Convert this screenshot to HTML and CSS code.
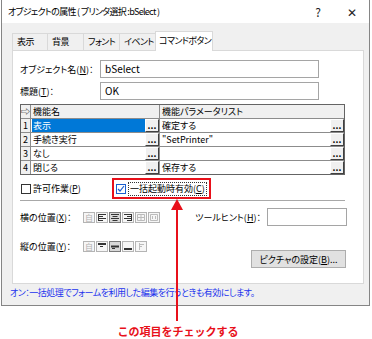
FILE: index.html
```html
<!DOCTYPE html>
<html lang="ja">
<head>
    <meta charset="UTF-8">
    <title>オブジェクトの属性</title>
    <link rel="stylesheet" href="styles.css">
</head>
<body>
<div class="window">
    <div class="titlebar">
        <span class="title">オブジェクトの属性 ( プリンタ選択 :bSelect )</span>
        <span class="tb-btn">?</span>
        <span class="tb-btn">✕</span>
    </div>
    <div class="dialog-body">
        <div class="tabs">
            <div class="tab first">表示</div>
            <div class="tab">背景</div>
            <div class="tab">フォント</div>
            <div class="tab">イベント</div>
            <div class="tab active">コマンドボタン</div>
        </div>
        <div class="panel">
            <div class="field-row">
                <label>オブジェクト名(<u>N</u>)：</label>
                <div class="input">bSelect</div>
            </div>
            <div class="field-row">
                <label>標題(<u>T</u>)：</label>
                <div class="input">OK</div>
            </div>

            <!-- 機能リスト -->
            <div class="fgrid">
                <div class="cell idx head">⇨</div>
                <div class="cell head">機能名</div>
                <div class="cell head param">機能パラメータリスト</div>

                <div class="cell idx">1</div>
                <div class="cell"><span class="sel">表示</span><span class="dots">...</span></div>
                <div class="cell param"><span class="txt">確定する</span><span class="dots">...</span></div>

                <div class="cell idx">2</div>
                <div class="cell"><span class="txt">手続き実行</span><span class="dots">...</span></div>
                <div class="cell param"><span class="txt">"SetPrinter"</span><span class="dots">...</span></div>

                <div class="cell idx">3</div>
                <div class="cell"><span class="txt">なし</span><span class="dots">...</span></div>
                <div class="cell param"><span class="txt"></span><span class="dots">...</span></div>

                <div class="cell idx last">4</div>
                <div class="cell last"><span class="txt">閉じる</span><span class="dots">...</span></div>
                <div class="cell param last"><span class="txt">保存する</span><span class="dots">...</span></div>
            </div>

            <div class="check-row">
                <div class="check first-check">
                    <span class="cb"></span>
                    <span>許可作業(<u>P</u>)</span>
                </div>
                <div class="check marked">
                    <span class="cb on">
                        <svg width="8" height="8" viewBox="0 0 8 8"><path d="M1 4l2 2 4-5" fill="none" stroke="#1a5fd0" stroke-width="1.2"/></svg>
                    </span>
                    <span class="focus">一括起動時有効(<u>C</u>)</span>
                </div>
            </div>
            <div class="separator"></div>

            <div class="lower">
                <div class="lower-left">
                    <div class="pos-row">
                        <label class="pos-label">横の位置(<u>X</u>)：</label>
                        <div class="icons">
                            <span class="ib off">自</span>
                            <span class="ib"><svg width="8" height="7" viewBox="0 0 8 7"><path d="M0.5 0v7M0 0.5h8M0 2.5h5M0 4.5h8M0 6.5h5" stroke="#333"/></svg></span>
                            <span class="ib on"><svg width="8" height="7" viewBox="0 0 8 7"><path d="M0 0.5h8M1.5 2.5h5M0 4.5h8M1.5 6.5h5" stroke="#333"/></svg></span>
                            <span class="ib"><svg width="8" height="7" viewBox="0 0 8 7"><path d="M7.5 0v7M0 0.5h8M3 2.5h5M0 4.5h8M3 6.5h5" stroke="#333"/></svg></span>
                            <span class="ib"><svg width="8" height="7" viewBox="0 0 8 7"><path d="M0.5 0.5h7v6h-7zM0 3.5h8M4 0v7" fill="none" stroke="#bbb"/></svg></span>
                            <span class="ib"><svg width="8" height="7" viewBox="0 0 8 7"><path d="M0.5 0.5h7v6h-7zM2.5 2v3M5.5 2v3" fill="none" stroke="#bbb"/></svg></span>
                        </div>
                    </div>
                    <div class="pos-row second">
                        <label class="pos-label">縦の位置(<u>Y</u>)：</label>
                        <div class="icons">
                            <span class="ib off">自</span>
                            <span class="ib"><svg width="8" height="7" viewBox="0 0 8 7"><path d="M0 0h8v2h-8zM2 3h3v1h-3z" fill="#333"/></svg></span>
                            <span class="ib on"><svg width="8" height="7" viewBox="0 0 8 7"><path d="M0 2.5h8v2h-8zM1 5h3v1h-3z" fill="#333"/></svg></span>
                            <span class="ib"><svg width="8" height="7" viewBox="0 0 8 7"><path d="M0 5h8v2h-8z" fill="#333"/></svg></span>
                            <span class="ib"><svg width="8" height="7" viewBox="0 0 8 7"><path d="M2.5 0v7M2 1.5h5M2 3.5h3" fill="none" stroke="#bbb"/></svg></span>
                        </div>
                    </div>
                </div>
                <div class="lower-right">
                    <div class="hint-row">
                        <label>ツールヒント(<u>H</u>)：</label>
                        <div class="input small"></div>
                    </div>
                    <button class="btn">ピクチャの設定(<u>B</u>)...</button>
                </div>
            </div>
        </div>
        <div class="note">オン：一括処理でフォームを利用した編集を行うときも有効にします。</div>
    </div>
</div>

<div class="callout">この項目をチェックする</div>

<!-- 注釈の矢印 -->
<svg class="arrow" width="12" height="122" viewBox="0 0 12 122">
    <path d="M6 0L0 11h12z" fill="#e8101a"/>
    <rect x="5" y="10" width="2" height="112" fill="#e8101a"/>
</svg>
</body>
</html>
```

FILE: styles.css
```css
* {
    box-sizing: border-box;
    margin: 0;
    padding: 0;
}

body {
    font-family: "Noto Sans CJK JP", "Noto Sans", sans-serif;
    font-size: 9px;
    font-feature-settings: "palt";
    color: #000;
    background: #fff;
    position: relative;
    width: 372px;
    height: 339px;
    overflow: hidden;
    white-space: nowrap;
}

u {
    text-decoration: underline;
    text-underline-offset: 1px;
}

.window {
    margin-left: 1px;
    width: 369px;
    border: 1px solid #858585;
    border-top: none;
    background: #f0f0f0;
}

.titlebar {
    height: 23px;
    background: #fff;
    display: flex;
    align-items: center;
    padding-left: 6px;
}

.title {
    flex: 1;
    font-size: 9px;
    letter-spacing: -0.7px;
}

.tb-btn {
    width: 34px;
    text-align: center;
    font-size: 12px;
    color: #222;
}

.dialog-body {
    padding: 8px 5px 5px 10px;
}

.tabs {
    display: flex;
    align-items: flex-end;
    height: 19px;
}

.tab {
    width: 37px;
    height: 17px;
    line-height: 15px;
    padding-left: 4px;
    border: 1px solid #d9d9d9;
    border-bottom: none;
    margin-right: -1px;
    background: #f0f0f0;
    letter-spacing: -0.6px;
    overflow: hidden;
}

.tab.first {
    width: 36px;
}

.tab.active {
    width: 58px;
    height: 20px;
    margin-bottom: -1px;
    line-height: 18px;
    padding-left: 3px;
    background: #fff;
    position: relative;
    z-index: 1;
}

.panel {
    height: 234px;
    border: 1px solid #d9d9d9;
    background: #fff;
    padding: 9px 17px 0 7px;
}

.field-row {
    display: flex;
    align-items: center;
    height: 18px;
    margin-bottom: 4px;
}

.field-row label {
    width: 80px;
}

.input {
    width: 219px;
    height: 18px;
    border: 1px solid #a5a5a5;
    padding-left: 4px;
    line-height: 16px;
    font-size: 10px;
}

.input.small {
    width: 80px;
    margin-right: -1px;
}

.fgrid {
    width: 325px;
    display: grid;
    grid-template-columns: 10px 129px 184px;
    border: 1px solid #646464;
}

.cell {
    height: 14px;
    display: flex;
    align-items: center;
    padding-left: 1px;
    border-right: 1px solid #8c8c8c;
    border-bottom: 1px solid #8c8c8c;
    line-height: 13px;
    overflow: hidden;
}

.cell.param {
    border-right: none;
}

.cell.last {
    height: 13px;
    border-bottom: none;
}

.cell.head {
    background: #f0f0f0;
    padding-left: 2px;
}

.cell.idx {
    background: #f0f0f0;
    justify-content: center;
    padding-left: 0;
}

.txt {
    flex: 1;
    padding-left: 1px;
}

.sel {
    flex: 1;
    height: 13px;
    padding-left: 1px;
    background: #0078d7;
    color: #fff;
}

.dots {
    width: 14px;
    height: 13px;
    flex: none;
    background: #f0f0f0;
    border: 1px solid;
    border-color: #fff #404040 #404040 #fff;
    font-size: 9px;
    font-weight: bold;
    line-height: 12px;
    text-align: center;
}

.check-row {
    display: flex;
    align-items: center;
    height: 21px;
    margin-top: 3px;
}

.check {
    display: flex;
    align-items: center;
    gap: 2px;
}

.first-check {
    width: 92px;
    padding-left: 1px;
}

.cb {
    width: 10px;
    height: 10px;
    border: 1px solid #333;
    background: #fff;
    display: flex;
    align-items: center;
    justify-content: center;
}

.cb.on {
    border-color: #1a5fd0;
}

.marked {
    width: 99px;
    height: 21px;
    border: 2px solid #e8101a;
    padding-left: 2px;
}

.focus {
    border: 1px dotted #333;
    padding: 0 1px;
    line-height: 12px;
}

.separator {
    width: 325px;
    height: 1px;
    margin-top: 1px;
    background: #a8a8a8;
}

.lower {
    display: flex;
}

.lower-left {
    width: 186px;
}

.pos-row {
    display: flex;
    align-items: center;
    height: 18px;
    margin-top: 7px;
}

.pos-row.second {
    margin-top: 11px;
}

.pos-label {
    width: 63px;
}

.icons {
    display: flex;
    gap: 1px;
}

.ib {
    width: 12px;
    height: 11px;
    border: 1px solid #b4b4b4;
    background: #f6f6f6;
    display: flex;
    align-items: center;
    justify-content: center;
}

.ib.on {
    border-color: #7a7a7a;
    background: #d8d8d8;
}

.ib.off {
    color: #b0b0b0;
    font-size: 8px;
    line-height: 9px;
}

.lower-right {
    flex: 1;
    display: flex;
    flex-direction: column;
}

.hint-row {
    display: flex;
    align-items: center;
    justify-content: flex-end;
    height: 18px;
    margin-top: 7px;
}

.hint-row label {
    margin-right: 6px;
}

.btn {
    align-self: flex-end;
    width: 95px;
    height: 18px;
    margin-top: 24px;
    background: #e1e1e1;
    border: 1px solid #adadad;
    font: inherit;
    color: #000;
}

.note {
    margin-left: -2px;
    padding-top: 2px;
    height: 16px;
    line-height: 14px;
    letter-spacing: -0.5px;
    color: #2233ee;
}

.callout {
    width: 356px;
    margin-top: 19px;
    text-align: center;
    font-size: 11px;
    font-weight: bold;
    font-feature-settings: normal;
    letter-spacing: 0;
    line-height: 12px;
    color: #e8101a;
}

.arrow {
    position: absolute;
    left: 171px;
    top: 199px;
}
```
